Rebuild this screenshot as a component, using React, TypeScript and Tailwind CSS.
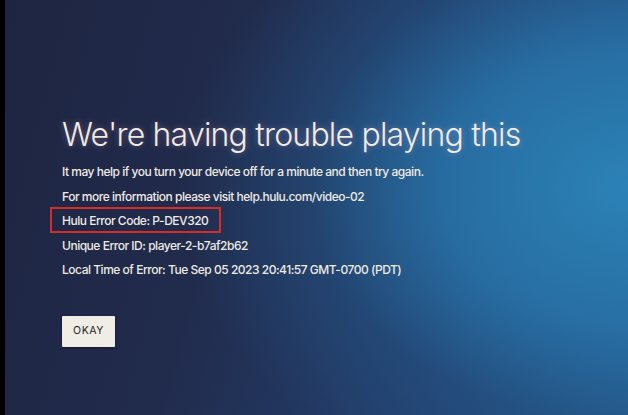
const details = [
  'It may help if you turn your device off for a minute and then try again.',
  'For more information please visit help.hulu.com/video-02',
  'Hulu Error Code: P-DEV320',
  'Unique Error ID: player-2-b7af2b62',
  'Local Time of Error: Tue Sep 05 2023 20:41:57 GMT-0700 (PDT)',
];

export default function App() {
  return (
    <div className="flex h-[415px] w-[628px] overflow-hidden bg-black font-['Inter',sans-serif]">
      <div className="w-[5px] shrink-0 bg-black" />
      <main className="flex flex-1 flex-col items-start bg-[radial-gradient(ellipse_85%_95%_at_100%_45%,#2b82b6_0%,rgba(40,116,170,0.85)_35%,rgba(36,90,140,0.4)_60%,transparent_85%),linear-gradient(105deg,#1e2542_0%,#212b4c_35%,#233f6d_70%,#245688_100%)] pl-[57px] pt-[119px] text-[#efebe5]">
        <h1 className="whitespace-nowrap text-[32px] font-light leading-none tracking-tight [text-shadow:0_0_6px_rgba(255,190,215,0.35)]">
          We're having trouble playing this
        </h1>
        <div className="mt-[9px] flex flex-col">
          {details.map((line, i) => (
            <p
              key={line}
              className="relative whitespace-nowrap text-[12px] font-medium leading-[24.5px] tracking-[-0.04em]"
            >
              {i === 2 && (
                <span className="absolute -left-[12px] -top-[2px] h-[26px] w-[171px] border-2 border-[#d52c26]" />
              )}
              {line}
            </p>
          ))}
        </div>
        <button className="mt-[33px] flex h-[31px] w-[53px] items-center justify-center rounded-[1px] bg-[#f0ede7] text-[10.5px] font-normal tracking-wider text-[#1f1f22] shadow-[0_1px_3px_rgba(0,0,0,0.4)]">
          OKAY
        </button>
      </main>
    </div>
  );
}
